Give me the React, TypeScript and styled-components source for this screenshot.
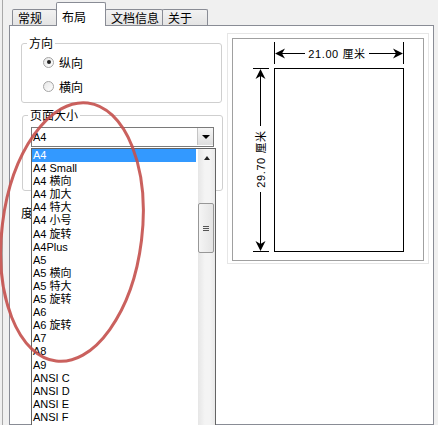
import styled, { createGlobalStyle } from "styled-components";

const GlobalStyle = createGlobalStyle`
  html, body {
    margin: 0;
    padding: 0;
    background: #f0f0f0;
  }
  body {
    font-family: "Liberation Sans", "Noto Sans CJK SC", sans-serif;
    font-size: 12px;
    color: #000;
  }
  * { box-sizing: border-box; }
`;

const paperSizes = [
  "A4",
  "A4 Small",
  "A4 横向",
  "A4 加大",
  "A4 特大",
  "A4 小号",
  "A4 旋转",
  "A4Plus",
  "A5",
  "A5 横向",
  "A5 特大",
  "A5 旋转",
  "A6",
  "A6 旋转",
  "A7",
  "A8",
  "A9",
  "ANSI C",
  "ANSI D",
  "ANSI E",
  "ANSI F",
];

const tabs = [
  { label: "常规", width: 45 },
  { label: "布局", width: 50, active: true },
  { label: "文档信息", width: 58 },
  { label: "关于", width: 46 },
];

const Window = styled.div`
  position: relative;
  width: 438px;
  height: 425px;
  overflow: hidden;
  padding-left: 2px;
  background: #f0f0f0;
`;

const Dialog = styled.div`
  height: 100%;
  border-left: 1px solid #a9a9a9;
  padding-left: 6px;
`;

const TabControl = styled.div`
  width: 425px;
  height: 100%;
  display: flex;
  flex-direction: column;
`;

const TabStrip = styled.div`
  display: flex;
  align-items: flex-end;
  height: 25px;
  padding-left: 3px;
`;

const Tab = styled.div<{ $active?: boolean; $w: number }>`
  position: relative;
  width: ${(p) => p.$w}px;
  height: ${(p) => (p.$active ? 24 : 16)}px;
  margin-bottom: ${(p) => (p.$active ? -1 : 0)}px;
  margin-left: -1px;
  padding: ${(p) => (p.$active ? 7 : 1)}px 0 0 5px;
  border: 1px solid #898c95;
  border-bottom: none;
  border-radius: 2px 2px 0 0;
  background: ${(p) =>
    p.$active ? "#fff" : "linear-gradient(#f2f2f2, #e4e4e4)"};
  z-index: ${(p) => (p.$active ? 2 : 1)};
  font-family: "Noto Sans CJK SC", sans-serif;
  font-size: 12px;
  line-height: 14px;
  white-space: nowrap;
  &:first-child {
    margin-left: 0;
  }
`;

const TabPanel = styled.div`
  flex: 1;
  display: flex;
  align-items: flex-start;
  gap: 4px;
  padding-left: 11px;
  border: 1px solid #898c95;
  background: #fff;
`;

const LeftColumn = styled.div`
  width: 202px;
  padding-top: 10px;
  display: flex;
  flex-direction: column;
`;

const GroupBox = styled.fieldset<{ $inset: number }>`
  margin: 0 ${(p) => 1 - p.$inset}px 0 ${(p) => p.$inset}px;
  padding: 0;
  min-width: 0;
  border: 1px solid #cfcfcf;
  border-radius: 3px;
  & + & {
    margin-top: 5px;
  }
`;

const Legend = styled.legend`
  margin-left: 5px;
  padding: 0 2px;
  font-family: "Noto Sans CJK SC", sans-serif;
  font-size: 12px;
  line-height: 14px;
`;

const RadioList = styled.div`
  display: flex;
  flex-direction: column;
  gap: 8px;
  padding: 4px 0 8px 21px;
`;

const RadioRow = styled.label`
  display: flex;
  align-items: center;
  gap: 5px;
  height: 16px;
  font-family: "Noto Sans CJK SC", sans-serif;
  font-size: 12px;
`;

const RadioDot = styled.span<{ $checked?: boolean }>`
  position: relative;
  width: 11px;
  height: 11px;
  border-radius: 50%;
  border: 1px solid #a5a5a5;
  background: linear-gradient(135deg, #e6e6e6, #fff);
  &::after {
    content: "";
    display: ${(p) => (p.$checked ? "block" : "none")};
    position: absolute;
    left: 2.5px;
    top: 2.5px;
    width: 4px;
    height: 4px;
    border-radius: 50%;
    background: #222;
  }
`;

const SizeBody = styled.div`
  padding: 5px 8px 43px 8px;
`;

const Combo = styled.div`
  display: flex;
  align-items: stretch;
  height: 20px;
  border: 1px solid #7a7a7a;
  background: #fff;
`;

const ComboValue = styled.div`
  flex: 1;
  padding-left: 1px;
  font-size: 11px;
  line-height: 18px;
`;

const ComboButton = styled.div`
  width: 16px;
  margin: 0 0 1px;
  display: flex;
  align-items: center;
  justify-content: center;
  border-left: 1px solid #c4c4c4;
  background: linear-gradient(#f6f6f6, #dedede);
  &::after {
    content: "";
    border-left: 4px solid transparent;
    border-right: 4px solid transparent;
    border-top: 4px solid #000;
  }
`;

const UnitLabel = styled.div`
  margin-top: 15px;
  font-family: "Noto Sans CJK SC", sans-serif;
  font-size: 12px;
  line-height: 14px;
`;

const PreviewOuter = styled.div`
  width: 202px;
  margin-top: 7px;
  padding: 4px 4px 2px 4px;
  border: 1px solid #e6e6e6;
`;

const PreviewFrame = styled.div`
  height: 223px;
  border: 1px solid #a0a0a0;
  background: #fff;
`;

const DropList = styled.div`
  position: absolute;
  left: 31px;
  top: 148px;
  width: 185px;
  height: 300px;
  display: flex;
  border: 1px solid #646464;
  background: #fff;
  z-index: 5;
`;

const Items = styled.div`
  flex: 1;
  padding-right: 2px;
`;

const Item = styled.div<{ $selected?: boolean }>`
  height: 13.1px;
  padding-left: 1px;
  font-size: 11px;
  line-height: 13px;
  white-space: nowrap;
  color: ${(p) => (p.$selected ? "#fff" : "#000")};
  background: ${(p) => (p.$selected ? "#3399ff" : "transparent")};
`;

const ScrollBar = styled.div`
  width: 17px;
  display: flex;
  flex-direction: column;
  background: linear-gradient(to right, #e6e6e6, #f4f4f4 40%, #f4f4f4 70%, #e9e9e9);
`;

const ScrollArrow = styled.div`
  height: 17px;
  display: flex;
  align-items: center;
  justify-content: center;
  &::after {
    content: "";
    border-left: 3.5px solid transparent;
    border-right: 3.5px solid transparent;
    border-bottom: 4px solid #222;
  }
`;

const Thumb = styled.div`
  width: 16px;
  height: 50px;
  margin-top: 37px;
  display: flex;
  flex-direction: column;
  align-items: center;
  justify-content: center;
  gap: 1px;
  border: 1px solid #979797;
  border-radius: 2px;
  background: linear-gradient(to right, #f5f5f5, #e4e4e4);
`;

const Grip = styled.span`
  width: 6px;
  height: 1px;
  background: #555;
`;

const Annotation = styled.svg`
  position: absolute;
  left: 0;
  top: 0;
  pointer-events: none;
  z-index: 10;
`;

const arrow = (x: number, y: number, angle: number) => (
  <polygon
    points="0,0 -10,-5 -7,0 -10,5"
    transform={`translate(${x} ${y}) rotate(${angle})`}
    fill="#000"
  />
);

function PagePreview() {
  return (
    <svg width="190" height="221" viewBox="0 0 190 221">
      <g stroke="#000" strokeWidth="1" fill="none">
        <rect x="41.5" y="29.5" width="129" height="183" />
        <line x1="41.5" y1="3" x2="41.5" y2="25" />
        <line x1="170.5" y1="3" x2="170.5" y2="25" />
        <line x1="43" y1="14.5" x2="72" y2="14.5" />
        <line x1="136" y1="14.5" x2="169" y2="14.5" />
        <line x1="20" y1="29.5" x2="36" y2="29.5" />
        <line x1="20" y1="212.5" x2="36" y2="212.5" />
        <line x1="27.5" y1="31" x2="27.5" y2="87" />
        <line x1="27.5" y1="153" x2="27.5" y2="211" />
      </g>
      {arrow(42, 14.5, 180)}
      {arrow(170, 14.5, 0)}
      {arrow(27.5, 30, -90)}
      {arrow(27.5, 212, 90)}
      <text
        x="104"
        y="18.5"
        textAnchor="middle"
        fontSize="11"
        letterSpacing="0.6"
        fontFamily='"Liberation Sans", "Noto Sans CJK SC", sans-serif'
      >
        21.00 厘米
      </text>
      <text
        transform="translate(31.5 120) rotate(-90)"
        textAnchor="middle"
        fontSize="11"
        letterSpacing="0.6"
        fontFamily='"Liberation Sans", "Noto Sans CJK SC", sans-serif'
      >
        29.70 厘米
      </text>
    </svg>
  );
}

export default function App() {
  return (
    <>
      <GlobalStyle />
      <Window>
        <Dialog>
          <TabControl>
            <TabStrip>
              {tabs.map((t) => (
                <Tab key={t.label} $w={t.width} $active={t.active}>
                  {t.label}
                </Tab>
              ))}
            </TabStrip>
            <TabPanel>
              <LeftColumn>
                <GroupBox $inset={0}>
                  <Legend>方向</Legend>
                  <RadioList>
                    <RadioRow>
                      <RadioDot $checked />
                      纵向
                    </RadioRow>
                    <RadioRow>
                      <RadioDot />
                      横向
                    </RadioRow>
                  </RadioList>
                </GroupBox>
                <GroupBox $inset={1}>
                  <Legend>页面大小</Legend>
                  <SizeBody>
                    <Combo>
                      <ComboValue>A4</ComboValue>
                      <ComboButton />
                    </Combo>
                  </SizeBody>
                </GroupBox>
                <UnitLabel>度</UnitLabel>
              </LeftColumn>
              <PreviewOuter>
                <PreviewFrame>
                  <PagePreview />
                </PreviewFrame>
              </PreviewOuter>
            </TabPanel>
          </TabControl>
        </Dialog>

        <DropList>
          <Items>
            {paperSizes.map((s, i) => (
              <Item key={s} $selected={i === 0}>
                {s}
              </Item>
            ))}
          </Items>
          <ScrollBar>
            <ScrollArrow />
            <Thumb>
              <Grip />
              <Grip />
              <Grip />
            </Thumb>
          </ScrollBar>
        </DropList>

        <Annotation width="438" height="425" viewBox="0 0 438 425">
          <ellipse
            cx="72"
            cy="232"
            rx="70"
            ry="130"
            transform="rotate(7 72 232)"
            fill="none"
            stroke="#c4504c"
            strokeWidth="3"
            opacity="0.9"
          />
        </Annotation>
      </Window>
    </>
  );
}
